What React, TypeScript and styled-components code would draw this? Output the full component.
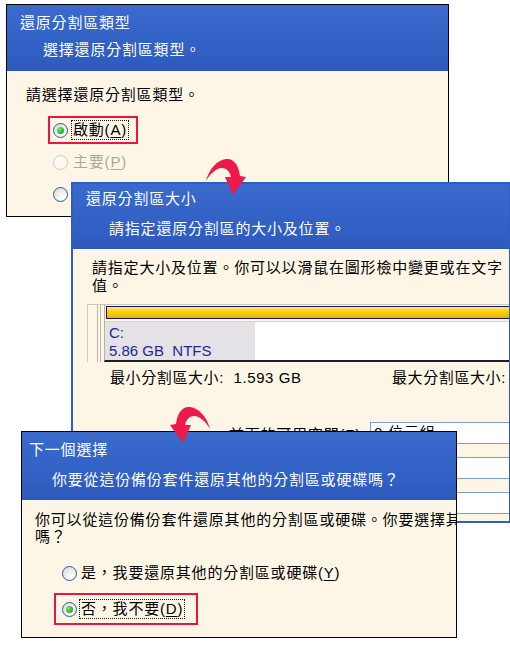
import React from 'react'
import styled, { createGlobalStyle } from 'styled-components'

const GlobalStyle = createGlobalStyle`
  html, body {
    margin: 0;
    padding: 0;
    background: #fff;
  }
  body {
    font-family: "Liberation Sans", "Noto Sans CJK TC", sans-serif;
    font-size: 15px;
  }
`

const Desktop = styled.div`
  position: relative;
  width: 510px;
  height: 659px;
  overflow: hidden;
  background: #fff;
`

type WinProps = { $x: number; $y: number; $w: number; $h: number; $z: number; $border: string }

const Window = styled.div<WinProps>`
  position: absolute;
  left: ${p => p.$x}px;
  top: ${p => p.$y}px;
  width: ${p => p.$w}px;
  height: ${p => p.$h}px;
  z-index: ${p => p.$z};
  box-sizing: border-box;
  border: ${p => p.$border};
  background: #fdf6e6;
  overflow: hidden;
  display: flex;
  flex-direction: column;
`

const Header = styled.div<{ $h: number; $pt: number; $indent: number }>`
  height: ${p => p.$h}px;
  flex-shrink: 0;
  box-sizing: border-box;
  padding: ${p => p.$pt}px 0 0 ${p => p.$indent}px;
  background: linear-gradient(180deg, #3a6acc 0%, #3362c6 55%, #2d59bb 100%);
  color: #fff;
  white-space: nowrap;
`

const Title = styled.div`
  line-height: 20px;
  letter-spacing: 0.8px;
`

const Subtitle = styled.div<{ $gap: number }>`
  line-height: 20px;
  letter-spacing: 0.8px;
  margin: ${p => p.$gap}px 0 0 23px;
`

const Body = styled.div<{ $pad: string }>`
  flex: 1;
  padding: ${p => p.$pad};
  color: #000;
`

const Line = styled.div<{ $lh?: number; $indent?: number }>`
  line-height: ${p => p.$lh ?? 20}px;
  padding-left: ${p => p.$indent ?? 0}px;
  letter-spacing: 0.8px;
  white-space: nowrap;
`

const Options = styled.div<{ $top: number; $left: number; $gap: number }>`
  display: flex;
  flex-direction: column;
  align-items: flex-start;
  gap: ${p => p.$gap}px;
  margin: ${p => p.$top}px 0 0 ${p => p.$left}px;
`

const OptionRow = styled.div<{ $marked?: boolean; $h: number; $pad: string; $gap: number }>`
  display: flex;
  align-items: center;
  gap: ${p => p.$gap}px;
  height: ${p => p.$h}px;
  box-sizing: border-box;
  padding: ${p => p.$pad};
  border: 2px solid ${p => (p.$marked ? '#e8163f' : 'transparent')};
  white-space: nowrap;
`

const Radio = styled.span<{ $checked?: boolean; $disabled?: boolean }>`
  position: relative;
  flex-shrink: 0;
  width: 15px;
  height: 15px;
  box-sizing: border-box;
  border-radius: 50%;
  border: 1px solid ${p => (p.$disabled ? '#cdcabd' : '#2a5c9c')};
  background: ${p =>
    p.$disabled ? '#fbf9f2' : 'radial-gradient(circle at 70% 75%, #ffffff 0%, #ecebe6 55%, #d6d5cf 100%)'};

  &::after {
    content: '';
    display: ${p => (p.$checked ? 'block' : 'none')};
    position: absolute;
    left: 3px;
    top: 3px;
    width: 7px;
    height: 7px;
    border-radius: 50%;
    background: radial-gradient(circle at 35% 35%, #7fe36a 0%, #30b52e 60%, #1d8f1d 100%);
  }
`

const OptionLabel = styled.span<{ $focus?: boolean; $disabled?: boolean }>`
  line-height: 18px;
  padding: 0 1px;
  letter-spacing: 0.8px;
  border: 1px dotted ${p => (p.$focus ? '#1a1a1a' : 'transparent')};
  color: ${p => (p.$disabled ? '#aca899' : '#000')};

  u {
    text-decoration-thickness: 1px;
    text-underline-offset: 2px;
  }
`

const BarFrame = styled.div`
  display: flex;
  height: 58px;
  margin: 9px 0 0 0;
  box-sizing: border-box;
  border-top: 1px solid #cbc7ba;
  border-left: 1px solid #cfcbbe;
`

const Gutter = styled.div<{ $w: number }>`
  width: ${p => p.$w}px;
  flex-shrink: 0;
  border-right: 1px solid #bcb8ac;
`

const PartitionBox = styled.div`
  flex: 1;
  display: flex;
  flex-direction: column;
  margin-left: 3px;
  border-left: 1px solid #b5b1a6;
  border-bottom: 2px solid #1e1e1e;
`

const YellowBar = styled.div`
  height: 13px;
  margin: 1px 0 0 1px;
  border: 1px solid #15156b;
  border-right: none;
  background: linear-gradient(180deg, #ffe866 0%, #fbcf0c 45%, #eab400 100%);
`

const PartRow = styled.div`
  flex: 1;
  display: flex;
  margin-top: 2px;
  border-top: 1px solid #d8d4ca;
`

const PartLabel = styled.div`
  width: 146px;
  padding: 2px 0 0 4px;
  background: #e4e1e7;
  color: #1b2a8e;
  line-height: 18px;
  font-family: "Liberation Sans", sans-serif;
`

const PartFree = styled.div`
  flex: 1;
  background: #fff;
`

const SizeRow = styled.div`
  display: flex;
  margin: 7px 0 0 23px;
  line-height: 18px;
  letter-spacing: 0.6px;
  white-space: nowrap;
`

const SizeCell = styled.span<{ $w?: number }>`
  width: ${p => (p.$w ? `${p.$w}px` : 'auto')};
  flex-shrink: 0;
`

const Fields = styled.div`
  display: flex;
  flex-direction: column;
  gap: 13px;
  margin-top: 35px;
`

const FieldRow = styled.div`
  display: flex;
  align-items: center;
  height: 22px;
  white-space: nowrap;
`

const FieldLabel = styled.span`
  width: 283px;
  flex-shrink: 0;
  box-sizing: border-box;
  padding-right: 4px;
  text-align: right;
  letter-spacing: 0.8px;
`

const FieldInput = styled.div`
  width: 200px;
  height: 22px;
  flex-shrink: 0;
  box-sizing: border-box;
  border: 1px solid #7f9db9;
  background: #fff;
  padding-left: 3px;
  line-height: 20px;
  letter-spacing: 0.8px;
`

const ArrowSvg = styled.svg<{ $x: number; $y: number }>`
  position: absolute;
  left: ${p => p.$x}px;
  top: ${p => p.$y}px;
  z-index: 10;
  overflow: visible;
`

const ARROW =
  'M6,26 C9,14 17,5 26,4 C34,3 39,11 40,21 L46,22 L33,40 L25,22 L31,22 C30,17 27,13 22,13 C16,13 10,19 6,26 Z'

const Arrow = ({ x, y, flip }: { x: number; y: number; flip?: boolean }) => (
  <ArrowSvg $x={x} $y={y} width={56} height={44} viewBox="0 0 56 44">
    <path d={ARROW} fill="#ee1a4c" transform={flip ? 'translate(56,0) scale(-1,1)' : undefined} />
  </ArrowSvg>
)

const App: React.FC = () => {
  return (
    <Desktop>
      <GlobalStyle />

      <Window $x={6} $y={4} $w={443} $h={213} $z={1} $border="1px solid #000">
        <Header $h={66} $pt={8} $indent={13}>
          <Title>還原分割區類型</Title>
          <Subtitle $gap={7}>選擇還原分割區類型。</Subtitle>
        </Header>
        <Body $pad="14px 0 0 19px">
          <Line>請選擇還原分割區類型。</Line>
          <Options $top={11} $left={22} $gap={4}>
            <OptionRow $marked $h={28} $pad="0 7px 0 3px" $gap={3}>
              <Radio $checked />
              <OptionLabel $focus>
                啟動(<u>A</u>)
              </OptionLabel>
            </OptionRow>
            <OptionRow $h={28} $pad="0 7px 0 3px" $gap={3}>
              <Radio $disabled />
              <OptionLabel $disabled>
                主要(<u>P</u>)
              </OptionLabel>
            </OptionRow>
            <OptionRow $h={28} $pad="0 7px 0 3px" $gap={3}>
              <Radio />
            </OptionRow>
          </Options>
        </Body>
      </Window>

      <Window $x={71} $y={182} $w={440} $h={341} $z={2} $border="2px solid #2f5ec3">
        <Header $h={65} $pt={5} $indent={13}>
          <Title>還原分割區大小</Title>
          <Subtitle $gap={10}>請指定還原分割區的大小及位置。</Subtitle>
        </Header>
        <Body $pad="10px 0 0 14px">
          <Line $lh={18} $indent={5}>請指定大小及位置。你可以以滑鼠在圖形檢中變更或在文字</Line>
          <Line $lh={18} $indent={5}>值。</Line>
          <BarFrame>
            <Gutter $w={9} />
            <Gutter $w={2} />
            <PartitionBox>
              <YellowBar />
              <PartRow>
                <PartLabel>
                  C:
                  <br />
                  5.86 GB&nbsp;&nbsp;NTFS
                </PartLabel>
                <PartFree />
              </PartRow>
            </PartitionBox>
          </BarFrame>
          <SizeRow>
            <SizeCell $w={282}>最小分割區大小:&nbsp;&nbsp;1.593 GB</SizeCell>
            <SizeCell>最大分割區大小:</SizeCell>
          </SizeRow>
          <Fields>
            <FieldRow>
              <FieldLabel>前面的可用空間(F):</FieldLabel>
              <FieldInput>0 位元組</FieldInput>
            </FieldRow>
            <FieldRow>
              <FieldLabel />
              <FieldInput />
            </FieldRow>
            <FieldRow>
              <FieldLabel />
              <FieldInput />
            </FieldRow>
          </Fields>
        </Body>
      </Window>

      <Window $x={21} $y={431} $w={436} $h={207} $z={3} $border="1px solid #000">
        <Header $h={68} $pt={8} $indent={7}>
          <Title>下一個選擇</Title>
          <Subtitle $gap={10}>你要從這份備份套件還原其他的分割區或硬碟嗎？</Subtitle>
        </Header>
        <Body $pad="11px 0 0 13px">
          <Line $lh={17}>你可以從這份備份套件還原其他的分割區或硬碟。你要選擇其</Line>
          <Line $lh={17}>嗎？</Line>
          <Options $top={12} $left={19} $gap={4}>
            <OptionRow $h={32} $pad="0 11px 0 6px" $gap={2}>
              <Radio />
              <OptionLabel>
                是，我要還原其他的分割區或硬碟(<u>Y</u>)
              </OptionLabel>
            </OptionRow>
            <OptionRow $marked $h={32} $pad="0 11px 0 6px" $gap={2}>
              <Radio $checked />
              <OptionLabel $focus>
                否，我不要(<u>D</u>)
              </OptionLabel>
            </OptionRow>
          </Options>
        </Body>
      </Window>

      <Arrow x={200} y={155} />
      <Arrow x={160} y={403} flip />
    </Desktop>
  )
}

export default App
